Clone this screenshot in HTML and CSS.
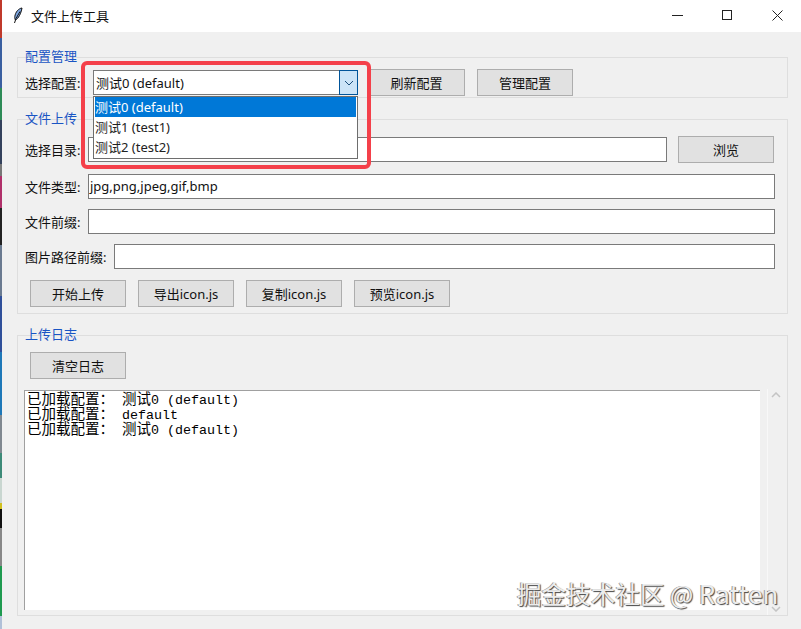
FILE: index.html
```html
<!DOCTYPE html>
<html lang="zh-CN">
<head>
<meta charset="utf-8">
<title>文件上传工具</title>
<link rel="stylesheet" href="styles.css">
</head>
<body>
<div class="screen">
  <div class="desktop-strip"></div>
  <div class="window">
    <header class="titlebar">
      <svg class="app-icon" width="10" height="17" viewBox="0 0 10 17">
        <path d="M9 1C5.500 1.500 2.500 5 1.800 9.500C1.600 11 2 12.500 2.500 13C5.500 11.500 8 6.500 9 1Z" fill="#7ea8e4" stroke="#111" stroke-width="1"/>
        <path d="M7 4.500L3 11.500L1.500 16" fill="none" stroke="#111" stroke-width="1"/>
      </svg>
      <span class="title">文件上传工具</span>
      <div class="win-controls">
        <svg class="win-btn" width="50" height="32" viewBox="0 0 50 32"><path d="M19 15.500H30" stroke="#222" fill="none"/></svg>
        <svg class="win-btn" width="50" height="32" viewBox="0 0 50 32"><rect x="19.500" y="10.500" width="9" height="9" stroke="#222" fill="none"/></svg>
        <svg class="win-btn" width="50" height="32" viewBox="0 0 50 32"><path d="M19.500 10.500L29.500 20.500M29.500 10.500L19.500 20.500" stroke="#222" fill="none"/></svg>
      </div>
    </header>

    <main class="content">
      <section class="group group-config">
        <h2 class="group-label">配置管理</h2>
        <div class="row">
          <label class="label label-config">选择配置:</label>
          <div class="combo">
            <span class="combo-value">测试0 (default)</span>
            <span class="combo-arrow">
              <svg width="10" height="6" viewBox="0 0 10 6"><path d="M1 1L5 5L9 1" fill="none" stroke="#1d4f7c" stroke-width="1"/></svg>
            </span>
            <ul class="dropdown">
              <li class="item item-active">测试0 (default)</li>
              <li class="item">测试1 (test1)</li>
              <li class="item">测试2 (test2)</li>
            </ul>
            <div class="highlight"></div>
          </div>
          <button class="btn btn-refresh">刷新配置</button>
          <button class="btn btn-manage">管理配置</button>
        </div>
      </section>

      <section class="group group-upload">
        <h2 class="group-label">文件上传</h2>
        <div class="row row-dir">
          <label class="label">选择目录:</label>
          <div class="input input-dir"></div>
          <button class="btn btn-browse">浏览</button>
        </div>
        <div class="row row-field">
          <label class="label">文件类型:</label>
          <div class="input input-grow">jpg,png,jpeg,gif,bmp</div>
        </div>
        <div class="row row-field">
          <label class="label">文件前缀:</label>
          <div class="input input-grow"></div>
        </div>
        <div class="row row-field">
          <label class="label label-long">图片路径前缀:</label>
          <div class="input input-grow"></div>
        </div>
        <div class="actions">
          <button class="btn">开始上传</button>
          <button class="btn">导出icon.js</button>
          <button class="btn">复制icon.js</button>
          <button class="btn">预览icon.js</button>
        </div>
      </section>

      <section class="group group-log">
        <h2 class="group-label">上传日志</h2>
        <button class="btn btn-clear">清空日志</button>
        <div class="log-area">
          <div class="log">
            <div class="log-line"><span class="cjk">已加载配置<span class="colon">&#xFF1A;</span></span> <span class="cjk">测试</span>0 (default)</div>
            <div class="log-line"><span class="cjk">已加载配置<span class="colon">&#xFF1A;</span></span> default</div>
            <div class="log-line"><span class="cjk">已加载配置<span class="colon">&#xFF1A;</span></span> <span class="cjk">测试</span>0 (default)</div>
          </div>
          <div class="scrollbar">
            <svg width="10" height="6" viewBox="0 0 10 6"><path d="M1 5L5 1L9 5" fill="none" stroke="#c4c4c4" stroke-width="1.500"/></svg>
            <svg width="10" height="6" viewBox="0 0 10 6"><path d="M1 1L5 5L9 1" fill="none" stroke="#c4c4c4" stroke-width="1.500"/></svg>
          </div>
        </div>
      </section>
    </main>
    <div class="watermark">掘金技术社区 @ <span class="watermark-latin">Ratten</span></div>
  </div>
</div>
</body>
</html>
```

FILE: styles.css
```css
* {
  box-sizing: border-box;
}

html, body {
  margin: 0;
  padding: 0;
}

body {
  font-family: "Noto Sans", "Noto Sans CJK SC", sans-serif;
  font-size: 13px;
  color: #111;
  background: #f0f0f0;
}

.screen {
  display: flex;
  width: 801px;
  height: 629px;
  overflow: hidden;
}

.desktop-strip {
  flex: 0 0 2px;
  background: linear-gradient(to bottom,
    #c0392b 0 6%, #3a5fa0 6% 14%, #2e8b57 14% 19%, #33415c 19% 26%,
    #777 26% 28%, #b0306a 28% 33%, #222 33% 39%, #6a7a90 39% 47%,
    #2f4f9a 47% 56%, #1e78b8 56% 66%, #808890 66% 72%,
    #3d8a78 72% 76%, #c9d6d0 76% 80%, #d0c020 80% 81%, #111 81% 84%,
    #888 84% 90%, #1f9a50 90% 98%, #b0c0d8 98% 100%);
}

.window {
  position: relative;
  flex: 1;
  display: flex;
  flex-direction: column;
}

/* Title bar */
.titlebar {
  display: flex;
  align-items: center;
  flex: 0 0 32px;
  background: #fff;
  padding-left: 11px;
}

.app-icon {
  flex: none;
  margin-bottom: 2px;
}

.title {
  margin-left: 8px;
  font-size: 13px;
  line-height: 18px;
  color: #111;
}

.win-controls {
  display: flex;
  margin-left: auto;
  margin-right: -1px;
}

.win-btn {
  display: block;
}

/* Content */
.content {
  flex: 1;
  display: flex;
  flex-direction: column;
  padding: 25px 14px 0 15px;
  background: #f0f0f0;
}

.group {
  position: relative;
  border: 1px solid #dedede;
  padding-left: 7px;
}

.group-label {
  position: absolute;
  top: -11px;
  left: 7px;
  margin: 0;
  font-size: 13px;
  font-weight: 400;
  line-height: 18px;
  color: #1a55c4;
}

.group-config {
  height: 41px;
}

.group-upload {
  margin-top: 21px;
  height: 195px;
  padding-top: 16px;
}

.group-log {
  margin-top: 21px;
  height: 281px;
  padding-top: 16px;
  padding-left: 0;
}

.row {
  display: flex;
  align-items: center;
}

.group-config .row {
  padding-top: 11px;
}

.label {
  flex: none;
  width: 63px;
  line-height: 18px;
  color: #111;
  white-space: nowrap;
}

.label-config {
  width: 68px;
}

.label-long {
  width: 89px;
}

/* Combobox */
.combo {
  position: relative;
  flex: none;
  display: flex;
  align-items: center;
  width: 265px;
  height: 25px;
  background: #fff;
  border: 1px solid #7a7a7a;
  padding-left: 2px;
}

.combo-value {
  line-height: 18px;
}

.combo-arrow {
  position: absolute;
  top: -1px;
  right: -1px;
  width: 19px;
  height: 25px;
  display: flex;
  align-items: center;
  justify-content: center;
  background: #cce4f7;
  border: 1px solid #005499;
}

.dropdown {
  position: absolute;
  top: 25px;
  left: -1px;
  width: 265px;
  height: 63px;
  margin: 0;
  padding: 0 1px;
  list-style: none;
  background: #fff;
  border: 1px solid #6e6e6e;
  z-index: 2;
}

.item {
  height: 20px;
  line-height: 20px;
  color: #222;
}

.item-active {
  background: #0078d7;
  color: #fff;
}

.highlight {
  position: absolute;
  top: -10px;
  left: -13px;
  width: 290px;
  height: 108px;
  border: 4px solid #f4404a;
  border-radius: 6px;
  z-index: 3;
  pointer-events: none;
}

/* Buttons */
.btn {
  flex: none;
  width: 96px;
  height: 27px;
  padding: 0;
  font: inherit;
  line-height: 18px;
  color: #111;
  background: #e1e1e1;
  border: 1px solid #adadad;
}

.btn-refresh {
  margin-left: 10px;
  width: 97px;
}

.btn-manage {
  margin-left: 12px;
}

.btn-browse {
  margin-left: 11px;
}

.btn-clear {
  display: block;
  margin-left: 12px;
}

/* Inputs */
.input {
  height: 25px;
  line-height: 22px;
  background: #fff;
  border: 1px solid #7a7a7a;
  padding-left: 1px;
  font-size: 13px;
}

.input-dir {
  width: 579px;
}

.input-grow {
  flex: none;
  margin-right: 11px;
}

.row-dir {
  height: 27px;
}

.row-field {
  margin-top: 10px;
}

.row-dir + .row-field {
  margin-top: 11px;
}

.row-field .input-grow {
  width: 687px;
}

.row-field .label-long + .input-grow {
  width: 661px;
}

.actions {
  display: flex;
  gap: 12px;
  margin-top: 11px;
  margin-left: 5px;
}

/* Log */
.log-area {
  display: flex;
  margin-top: 11px;
  height: 220px;
  margin-left: 6px;
}

.log {
  width: 736px;
  padding: 0 0 0 2px;
  background: #fff;
  border-top: 1px solid #a0a0a0;
  border-left: 1px solid #a0a0a0;
  font-family: "Liberation Mono", "Noto Sans CJK SC", monospace;
  font-size: 13.330px;
  line-height: 15px;
  color: #000;
}

.log-line {
  height: 15px;
  white-space: pre;
}

.log-line:first-child {
  margin-top: -1px;
}

.cjk {
  font-family: "Noto Sans CJK SC", sans-serif;
  font-size: 14.500px;
  font-weight: 400;
}

.colon {
  font-family: "Noto Sans CJK JP", sans-serif;
}

.scrollbar {
  display: flex;
  flex-direction: column;
  justify-content: space-between;
  align-items: center;
  width: 20px;
  margin-left: 7px;
  padding: 3px 3px 3px 0;
  border-left: 1px solid #f8f8f8;
  height: 226px;
  margin-top: -1px;
}

/* Watermark, sits over the window */
.watermark {
  position: absolute;
  top: 576px;
  left: 515px;
  font-family: "Noto Sans CJK SC", "Noto Sans", sans-serif;
  font-size: 24.600px;
  line-height: 34px;
  color: #ececec;
  text-shadow: 1px 1px 1px #444, -1px 0 0 #999;
  white-space: nowrap;
}

.watermark-latin {
  font-size: 26px;
}
```
